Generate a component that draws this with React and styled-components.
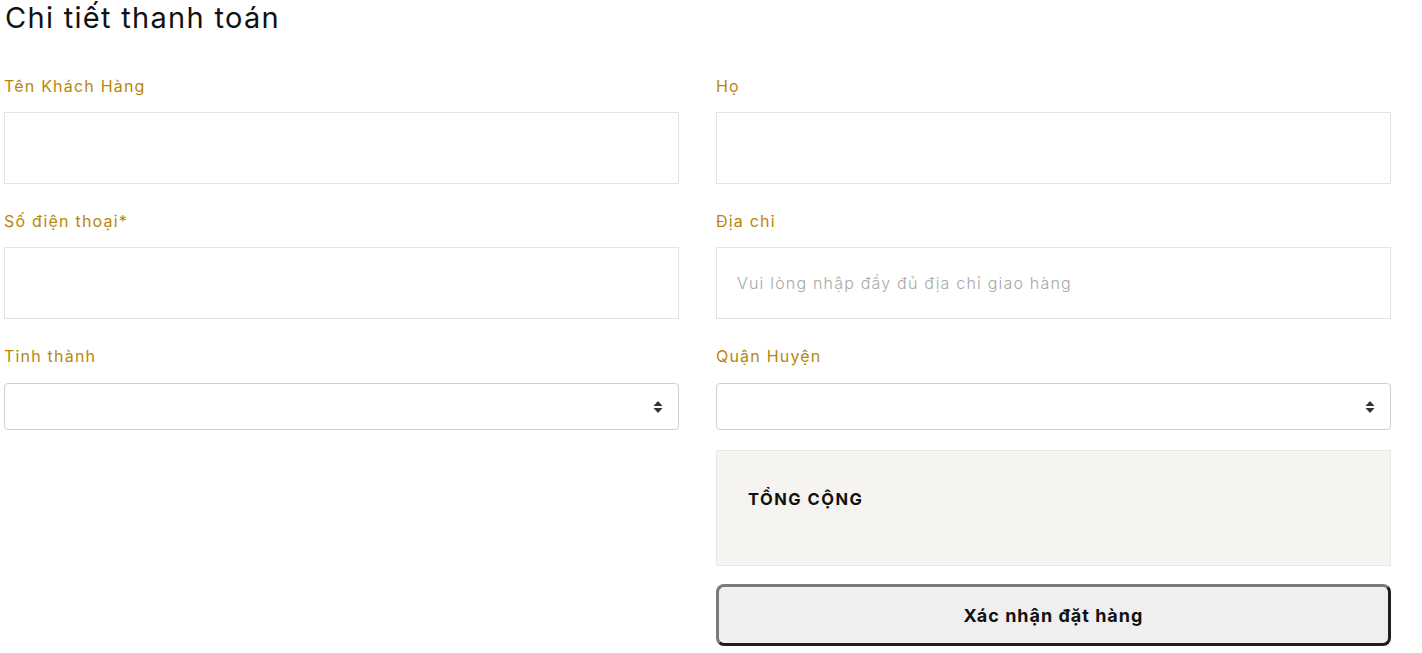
import React from "react";
import styled, { createGlobalStyle } from "styled-components";

const Global = createGlobalStyle`
  html, body { margin: 0; padding: 0; background: #fff; }
  body { font-family: Inter, "Noto Sans", sans-serif; color: #111; }
  * { box-sizing: border-box; }
`;

const Page = styled.div`
  padding: 0 4px;
`;

const Title = styled.h2`
  margin: 0 0 38px 1px;
  font-size: 29px;
  line-height: 36px;
  font-weight: 400;
  letter-spacing: 1.3px;
  color: #111;
`;

const Grid = styled.div`
  display: grid;
  grid-template-columns: 675px 675px;
  column-gap: 37px;
  align-items: start;
`;

const Field = styled.div`
  display: flex;
  flex-direction: column;
  margin-bottom: ${(p) => p.$mb ?? 25}px;
`;

const Label = styled.label`
  font-size: 16px;
  line-height: 24px;
  letter-spacing: 1.2px;
  color: #b8860b;
  margin-bottom: ${(p) => p.$gap ?? 14}px;
`;

const Input = styled.input`
  height: 72px;
  width: 100%;
  border: 1px solid #e3e3e3;
  padding: 0 20px;
  font-family: inherit;
  font-size: 16px;
  font-weight: 300;
  letter-spacing: 1.2px;
  outline: none;
  &::placeholder { color: #a8a8a8; }
`;

const SelectBox = styled.div`
  position: relative;
  height: 47px;
  border: 1px solid #cfcfcf;
  border-radius: 4px;
  background: #fff;
`;

const Arrows = styled.svg`
  position: absolute;
  right: 15px;
  top: 16px;
`;

const Summary = styled.div`
  background: #f5f4f0;
  border: 1px solid #e8e7e3;
  padding: 36px 31px 54px;
  margin-bottom: 18px;
`;

const SummaryTitle = styled.h4`
  margin: 0;
  font-size: 16.5px;
  line-height: 24px;
  font-weight: 700;
  letter-spacing: 1.5px;
  color: #111;
`;

const Button = styled.button`
  width: 100%;
  height: 62px;
  background: #efefef;
  border: 3px solid;
  border-color: #7a7a7a #1e1e1e #1e1e1e #7a7a7a;
  border-radius: 8px;
  font-family: inherit;
  font-size: 18px;
  font-weight: 700;
  letter-spacing: 1px;
  color: #111;
`;

const Select = () => (
  <SelectBox>
    <Arrows width="10" height="14" viewBox="0 0 10 14">
      <path d="M5 1 L9.5 6 H0.5 Z M5 13 L9.5 8 H0.5 Z" fill="#333" />
    </Arrows>
  </SelectBox>
);

export default function App() {
  return (
    <>
      <Global />
      <Page>
        <Title>Chi tiết thanh toán</Title>
        <Grid>
          <div>
            <Field>
              <Label>Tên Khách Hàng</Label>
              <Input />
            </Field>
            <Field>
              <Label>Số điện thoại*</Label>
              <Input />
            </Field>
            <Field>
              <Label $gap={15}>Tỉnh thành</Label>
              <Select />
            </Field>
          </div>
          <div>
            <Field>
              <Label>Họ</Label>
              <Input />
            </Field>
            <Field>
              <Label>Địa chỉ</Label>
              <Input placeholder="Vui lòng nhập đầy đủ địa chỉ giao hàng" />
            </Field>
            <Field $mb={20}>
              <Label $gap={15}>Quận Huyện</Label>
              <Select />
            </Field>
            <Summary>
              <SummaryTitle>TỔNG CỘNG</SummaryTitle>
            </Summary>
            <Button>Xác nhận đặt hàng</Button>
          </div>
        </Grid>
      </Page>
    </>
  );
}
